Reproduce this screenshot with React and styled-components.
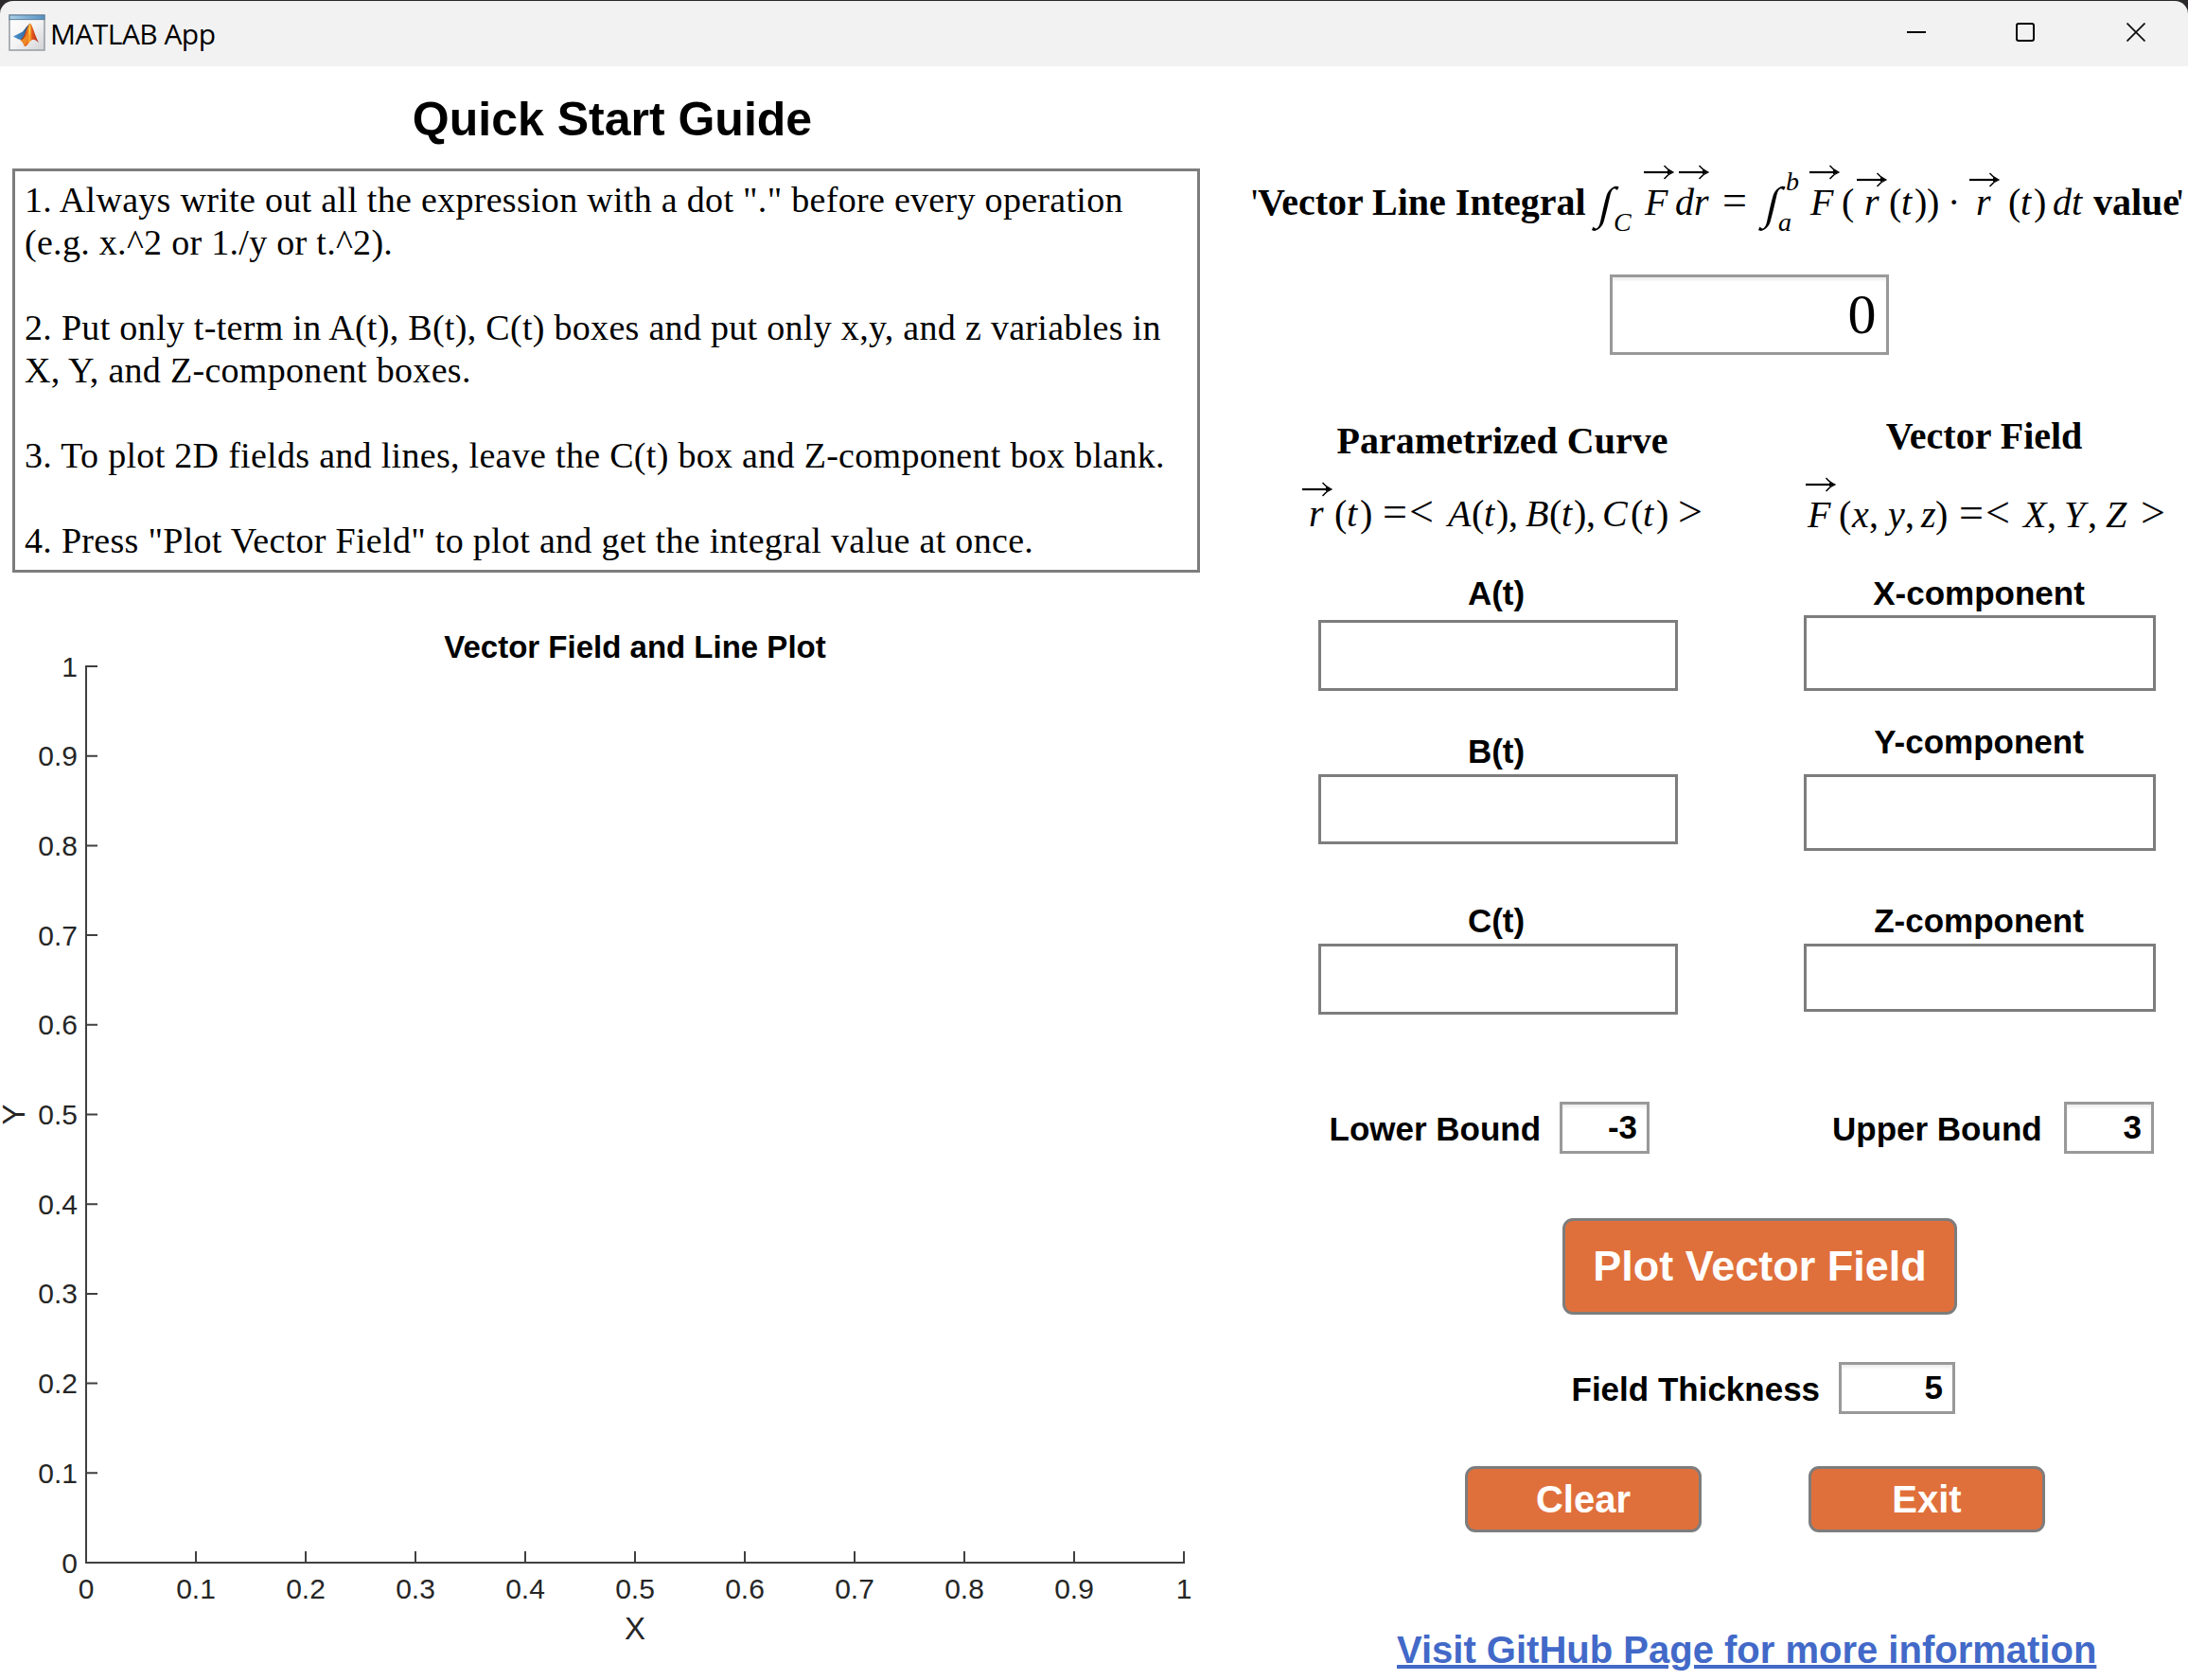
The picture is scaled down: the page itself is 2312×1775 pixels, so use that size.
import React from "react";
import styled, { createGlobalStyle } from "styled-components";

const SANS = `"Liberation Sans", Arial, sans-serif`;
const SERIF = `"Liberation Serif", "Times New Roman", serif`;

const GlobalStyle = createGlobalStyle`
  html, body { margin: 0; padding: 0; background: #2b292b; }
  *, *::before, *::after { box-sizing: border-box; }
  body { overflow: hidden; }
`;

const Window = styled.div`
  display: flex;
  flex-direction: column;
  width: 2312px;
  height: 1775px;
  overflow: hidden;
  background: #fff;
  color: #000;
  border-top: 1px solid #2b292b;
  font-family: ${SANS};
`;

const TitleBar = styled.header`
  display: flex;
  align-items: center;
  flex: none;
  height: 69px;
  padding-left: 9px;
  border-radius: 14px 14px 0 0;
  background: #f2f2f2;
`;

const Corners = styled.div`
  flex: none;
  background: #2b292b;
`;

const AppIcon = styled.svg`
  display: block;
  margin-top: -3px;
`;

const AppName = styled.span`
  margin-left: 5px;
  font: 30px/40px "Open Sans", "Noto Sans", sans-serif;
  letter-spacing: -0.55px;
`;

const WindowControls = styled.div`
  display: flex;
  margin-left: auto;
  margin-top: -3px;
`;

const ControlButton = styled.button`
  display: grid;
  place-items: center;
  width: ${(p) => p.$w}px;
  height: 60px;
  padding: 0;
  border: 0;
  background: none;
`;

const Main = styled.main`
  display: grid;
  grid-template-columns: 1293px 1fr;
  flex: 1;
`;

const Panel = styled.section`
  display: flex;
  flex-direction: column;
  min-width: 0;
`;

const GuideTitle = styled.h1`
  margin: 26px 0 22px;
  padding-left: 1px;
  font: bold 50px/60px ${SANS};
  text-align: center;
`;

const Guide = styled.div`
  width: 1255px;
  height: 427px;
  margin-left: 13px;
  padding: 8px 10px;
  border: 3px solid #7d7d7d;
  font: 38px/45px ${SERIF};
  letter-spacing: 0.3px;
  white-space: pre;
`;

const Plot = styled.svg`
  display: block;
  overflow: visible;
  text {
    font-family: ${SANS};
    fill: #262626;
  }
`;

const PlotTitle = styled.text`
  && {
    fill: #000;
  }
`;

const Formula = styled.div`
  display: flex;
  height: 60px;
  margin-top: ${(p) => p.$top}px;
  padding-left: ${(p) => p.$left}px;
  font: 40px/60px ${SERIF};
  white-space: pre;
`;

const TERM_SIZE = { small: 28, rel: 46 };

const Term = styled.span`
  position: relative;
  flex: none;
  width: ${(p) => p.$w}px;
  font-style: ${(p) => (p.$kind === "it" || p.$kind === "small" ? "italic" : "normal")};
  font-weight: ${(p) => (p.$kind === "bold" ? "bold" : "normal")};
  font-size: ${(p) => TERM_SIZE[p.$kind] || 40}px;
  top: ${(p) => p.$shift || (p.$kind === "rel" ? -2 : 0)}px;
`;

const Integral = styled.span`
  display: inline-block;
  transform: translate(4px, 1px) scale(1.2) skewX(-13deg);
`;

const Accent = styled.svg`
  position: absolute;
  left: ${(p) => p.$x}px;
  top: ${(p) => p.$y}px;
`;

const ResultField = styled.div`
  width: 295px;
  height: 85px;
  margin: 46px 0 0 408px;
  padding-right: 10.5px;
  border: 3px solid #999;
  box-shadow: inset 0 3px 3px rgba(0, 0, 0, 0.07);
  font: 60px/79px ${SERIF};
  text-align: right;
`;

const Columns = styled.div`
  display: grid;
  grid-template-columns: 580px 438px;
  height: 697px;
`;

const Column = styled.div`
  display: flex;
  flex-direction: column;
`;

const ColumnTitle = styled.h2`
  margin: ${(p) => p.$top}px 0 0;
  padding-left: 9px;
  font: bold 40px/50px ${SERIF};
  text-align: center;
`;

const FieldLabel = styled.label`
  height: ${(p) => p.$h || 50}px;
  margin-top: ${(p) => p.$top}px;
  padding-right: ${(p) => p.$right || 0}px;
  font: bold 35px/52px ${SANS};
  text-align: center;
`;

const TextField = styled.div`
  flex: none;
  align-self: center;
  width: ${(p) => p.$w}px;
  height: ${(p) => p.$h}px;
  margin-top: ${(p) => p.$top || 0}px;
  border: 3px solid #7d7d7d;
`;

const Row = styled.div`
  display: flex;
  height: ${(p) => p.$h}px;
  margin-top: ${(p) => p.$top}px;
  padding-left: ${(p) => p.$left}px;
`;

const InlineLabel = styled.label`
  width: ${(p) => p.$w}px;
  margin-left: ${(p) => p.$left || 0}px;
  font: bold 35px/57px ${SANS};
  white-space: nowrap;
`;

const NumberField = styled.div`
  width: ${(p) => p.$w}px;
  height: 55px;
  padding-right: 10px;
  border: 3px solid #999;
  box-shadow: inset 0 3px 3px rgba(0, 0, 0, 0.07);
  font: bold 35px/48px ${SANS};
  text-align: right;
`;

const Button = styled.button`
  width: ${(p) => p.$w}px;
  height: ${(p) => p.$h}px;
  margin-right: ${(p) => p.$gap || 0}px;
  padding: 0;
  border: 3px solid #7d7d7d;
  border-radius: 11px;
  background: #e0703b;
  color: #fff;
  font: bold ${(p) => p.$size}px/1.15 ${SANS};
`;

const Link = styled.a`
  margin: 99px 0 0 183px;
  color: #4269c8;
  font: bold 40px/50px ${SANS};
  text-decoration: underline;
  text-decoration-thickness: 4px;
  text-underline-offset: 2px;
`;

function MatlabIcon() {
  return (
    <AppIcon width="39" height="39" viewBox="0 0 39 39">
      <defs>
        <linearGradient id="paper" x1="0" y1="0" x2="1" y2="1">
          <stop offset="0" stopColor="#fff" />
          <stop offset="0.5" stopColor="#f4f4f5" />
          <stop offset="1" stopColor="#cfd1d4" />
        </linearGradient>
        <linearGradient id="bar" x1="0" y1="0" x2="1" y2="0">
          <stop offset="0" stopColor="#a9cfe6" />
          <stop offset="1" stopColor="#5591c2" />
        </linearGradient>
        <linearGradient id="flame" x1="0" y1="0" x2="1" y2="0">
          <stop offset="0" stopColor="#7d1a14" />
          <stop offset="0.35" stopColor="#e8601c" />
          <stop offset="0.5" stopColor="#fbb034" />
          <stop offset="0.65" stopColor="#e2561c" />
          <stop offset="1" stopColor="#a82018" />
        </linearGradient>
        <linearGradient id="wing" x1="0" y1="0" x2="1" y2="0">
          <stop offset="0" stopColor="#4b94cf" />
          <stop offset="0.6" stopColor="#3a76b0" />
          <stop offset="1" stopColor="#2c2c52" />
        </linearGradient>
      </defs>
      <rect x="1" y="1" width="37" height="37" fill="url(#paper)" stroke="#9aa0a6" strokeWidth="1.6" />
      <rect x="1" y="1" width="37" height="4.6" fill="url(#bar)" stroke="#5c7f9c" strokeWidth="1" />
      <path d="M5 23.5 L13 19.6 C16 18.6 18 14 22.6 9.6 L19 20 L14 27 L10.5 26.6 Z" fill="url(#wing)" />
      <path d="M22.6 9.4 C25.4 10.5 27.5 22 32 30.2 C28.5 26.8 26.3 25.6 23.7 28 C21.5 30.2 20 33.8 17 34 C16 31.5 15.2 28.8 12.4 27.2 C17.5 24.5 19.5 12.5 22.6 9.4 Z" fill="url(#flame)" />
      <path d="M12.8 27.4 C17 26 19 22 21 18 C21 24 20 30 17 34 C16 31.4 15.2 28.8 12.8 27.4 Z" fill="#ee8a24" />
      <path d="M22.4 11 C23.6 15 23.2 19 22.6 23 C21.8 19 21.4 15 22.4 11 Z" fill="#ffd84a" />
    </AppIcon>
  );
}

function VectorArrow({ x, y }) {
  return (
    <Accent $x={x} $y={y} width="32" height="16" viewBox="0 0 32 16">
      <path d="M0 8 H29" stroke="#000" strokeWidth="2.2" fill="none" />
      <path d="M21.5 1 Q25 5.6 31 8 Q25 10.4 21.5 15" stroke="#000" strokeWidth="1.3" fill="none" />
      <path d="M25 5.6 L31 8 L25 10.4 Z" />
    </Accent>
  );
}

/* Each term: [offset, text, kind, extras]; the last entry only closes the row. */
function MathLine({ top, terms }) {
  const start = terms[0][0];
  return (
    <Formula $top={top} $left={start - 1293}>
      {terms.slice(0, -1).map(([at, text, kind, extra = {}], i) => (
        <Term key={i} $w={terms[i + 1][0] - at} $kind={kind} $shift={extra.shift}>
          {kind === "int" ? <Integral>{text}</Integral> : text}
          {extra.arrow && <VectorArrow x={extra.arrow[0]} y={extra.arrow[1]} />}
        </Term>
      ))}
    </Formula>
  );
}

const LINE_INTEGRAL = [
  [1322, "'", "up"],
  [1329, "Vector Line Integral", "bold"],
  [1688, "∫", "int"],
  [1705, "C", "small", { shift: 21 }],
  [1738, "F", "it", { arrow: [-1, -10] }],
  [1770, "dr", "it", { arrow: [4, -10] }],
  [1820, "=", "rel"],
  [1864, "∫", "int"],
  [1879, "a", "small", { shift: 21 }],
  [1887, "b", "small", { shift: -22 }],
  [1913, "F", "it", { arrow: [-1, -10] }],
  [1946, "(", "up"],
  [1970, "r", "it", { arrow: [-8, -2] }],
  [1996, "(", "up"],
  [2009, "t", "it"],
  [2023, ")", "up"],
  [2036, ")", "up"],
  [2058, "·", "up"],
  [2088, "r", "it", { arrow: [-7, -2] }],
  [2122, "(", "up"],
  [2135, "t", "it"],
  [2149, ")", "up"],
  [2169, "dt", "it"],
  [2212, "value", "bold"],
  [2300, "'", "up"],
  [2310],
];

const CURVE = [
  [1383, "r", "it", { arrow: [-7, -4] }],
  [1410, "(", "up"],
  [1423, "t", "it"],
  [1437, ")", "up"],
  [1461, "=", "rel"],
  [1489, "<", "rel"],
  [1530, "A", "it"],
  [1555, "(", "up"],
  [1568, "t", "it"],
  [1581, ")", "up"],
  [1594, ",", "up"],
  [1612, "B", "it"],
  [1637, "(", "up"],
  [1650, "t", "it"],
  [1663, ")", "up"],
  [1676, ",", "up"],
  [1693, "C", "it"],
  [1723, "(", "up"],
  [1736, "t", "it"],
  [1750, ")", "up"],
  [1773, ">", "rel"],
  [1800],
];

const FIELD = [
  [1910, "F", "it", { arrow: [-2, -10] }],
  [1943, "(", "up"],
  [1957, "x", "it"],
  [1975, ",", "up"],
  [1995, "y", "it"],
  [2013, ",", "up"],
  [2030, "z", "it"],
  [2045, ")", "up"],
  [2070, "=", "rel"],
  [2098, "<", "rel"],
  [2138, "X", "it"],
  [2163, ",", "up"],
  [2181, "Y", "it"],
  [2206, ",", "up"],
  [2225, "Z", "it"],
  [2262, ">", "rel"],
  [2290],
];

const GUIDE = `1. Always write out all the expression with a dot "." before every operation
(e.g. x.^2 or 1./y or t.^2).

2. Put only t-term in A(t), B(t), C(t) boxes and put only x,y, and z variables in
X, Y, and Z-component boxes.

3. To plot 2D fields and lines, leave the C(t) box and Z-component box blank.

4. Press "Plot Vector Field" to plot and get the integral value at once.`;

const TICKS = ["0", "0.1", "0.2", "0.3", "0.4", "0.5", "0.6", "0.7", "0.8", "0.9", "1"];

function AxesPlot() {
  const x0 = 91;
  const x1 = 1251;
  const yTop = 99;
  const y0 = 1046;
  return (
    <Plot width="1293" height="1170" viewBox="0 0 1293 1170">
      <PlotTitle x="671" y="89.5" textAnchor="middle" fontSize="33" fontWeight="bold">
        Vector Field and Line Plot
      </PlotTitle>
      <path d={`M${x0} ${yTop - 1} V${y0} H${x1 + 1}`} fill="none" stroke="#404040" strokeWidth="2" />
      {TICKS.map((t, i) => {
        const x = x0 + ((x1 - x0) * i) / 10;
        const y = y0 - ((y0 - yTop) * i) / 10;
        return (
          <g key={t}>
            <path d={`M${x} ${y0} v-12 M${x0} ${y} h12`} stroke="#404040" strokeWidth="2" />
            <text x={x} y="1083.5" textAnchor="middle" fontSize="30">{t}</text>
            <text x="82" y={y + 10.5} textAnchor="end" fontSize="30">{t}</text>
          </g>
        );
      })}
      <text x="671" y="1127" textAnchor="middle" fontSize="33">X</text>
      <text transform="translate(26 572.5) rotate(-90)" textAnchor="middle" fontSize="33">Y</text>
    </Plot>
  );
}

export default function App() {
  return (
    <Window>
      <GlobalStyle />
      <Corners>
        <TitleBar>
          <MatlabIcon />
          <AppName>MATLAB App</AppName>
          <WindowControls>
            <ControlButton $w={106}>
              <svg width="20" height="20"><path d="M0 10 H20" stroke="#000" strokeWidth="2" /></svg>
            </ControlButton>
            <ControlButton $w={124}>
              <svg width="20" height="20"><rect x="1" y="1" width="18" height="18" rx="2" fill="none" stroke="#000" strokeWidth="2" /></svg>
            </ControlButton>
            <ControlButton $w={110}>
              <svg width="20" height="20"><path d="M0.5 0.5 L19.5 19.5 M19.5 0.5 L0.5 19.5" stroke="#111" strokeWidth="1.8" /></svg>
            </ControlButton>
          </WindowControls>
        </TitleBar>
      </Corners>
      <Main>
        <Panel>
          <GuideTitle>Quick Start Guide</GuideTitle>
          <Guide>{GUIDE}</Guide>
          <AxesPlot />
        </Panel>
        <Panel>
          <MathLine top={114} terms={LINE_INTEGRAL} />
          <ResultField>0</ResultField>
          <Columns>
            <Column>
              <ColumnTitle $top={66}>Parametrized Curve</ColumnTitle>
              <MathLine top={22} terms={CURVE} />
              <FieldLabel $top={28} $right={4}>A(t)</FieldLabel>
              <TextField $w={380} $h={75} $top={4} />
              <FieldLabel $top={38} $right={4}>B(t)</FieldLabel>
              <TextField $w={380} $h={74} />
              <FieldLabel $top={55} $right={4}>C(t)</FieldLabel>
              <TextField $w={380} $h={75} />
            </Column>
            <Column>
              <ColumnTitle $top={61}>Vector Field</ColumnTitle>
              <MathLine top={28} terms={FIELD.map(([at, ...rest]) => [at - 580, ...rest])} />
              <FieldLabel $top={27} $h={49} $right={2}>X-component</FieldLabel>
              <TextField $w={372} $h={80} />
              <FieldLabel $top={28} $right={2}>Y-component</FieldLabel>
              <TextField $w={372} $h={81} $top={10} />
              <FieldLabel $top={48} $right={2}>Z-component</FieldLabel>
              <TextField $w={372} $h={72} />
            </Column>
          </Columns>
          <Row $top={92} $h={55} $left={111.5}>
            <InlineLabel $w={243.5}>Lower Bound</InlineLabel>
            <NumberField $w={95}>-3</NumberField>
            <InlineLabel $w={245} $left={193}>Upper Bound</InlineLabel>
            <NumberField $w={95}>3</NumberField>
          </Row>
          <Row $top={68} $h={102} $left={358}>
            <Button $w={417} $h={102} $size={45}>Plot Vector Field</Button>
          </Row>
          <Row $top={50} $h={55} $left={367.5}>
            <InlineLabel $w={282.5}>Field Thickness</InlineLabel>
            <NumberField $w={123}>5</NumberField>
          </Row>
          <Row $top={55} $h={70} $left={255}>
            <Button $w={250} $h={70} $size={40} $gap={113}>Clear</Button>
            <Button $w={250} $h={70} $size={40}>Exit</Button>
          </Row>
          <Link>Visit GitHub Page for more information</Link>
        </Panel>
      </Main>
    </Window>
  );
}
